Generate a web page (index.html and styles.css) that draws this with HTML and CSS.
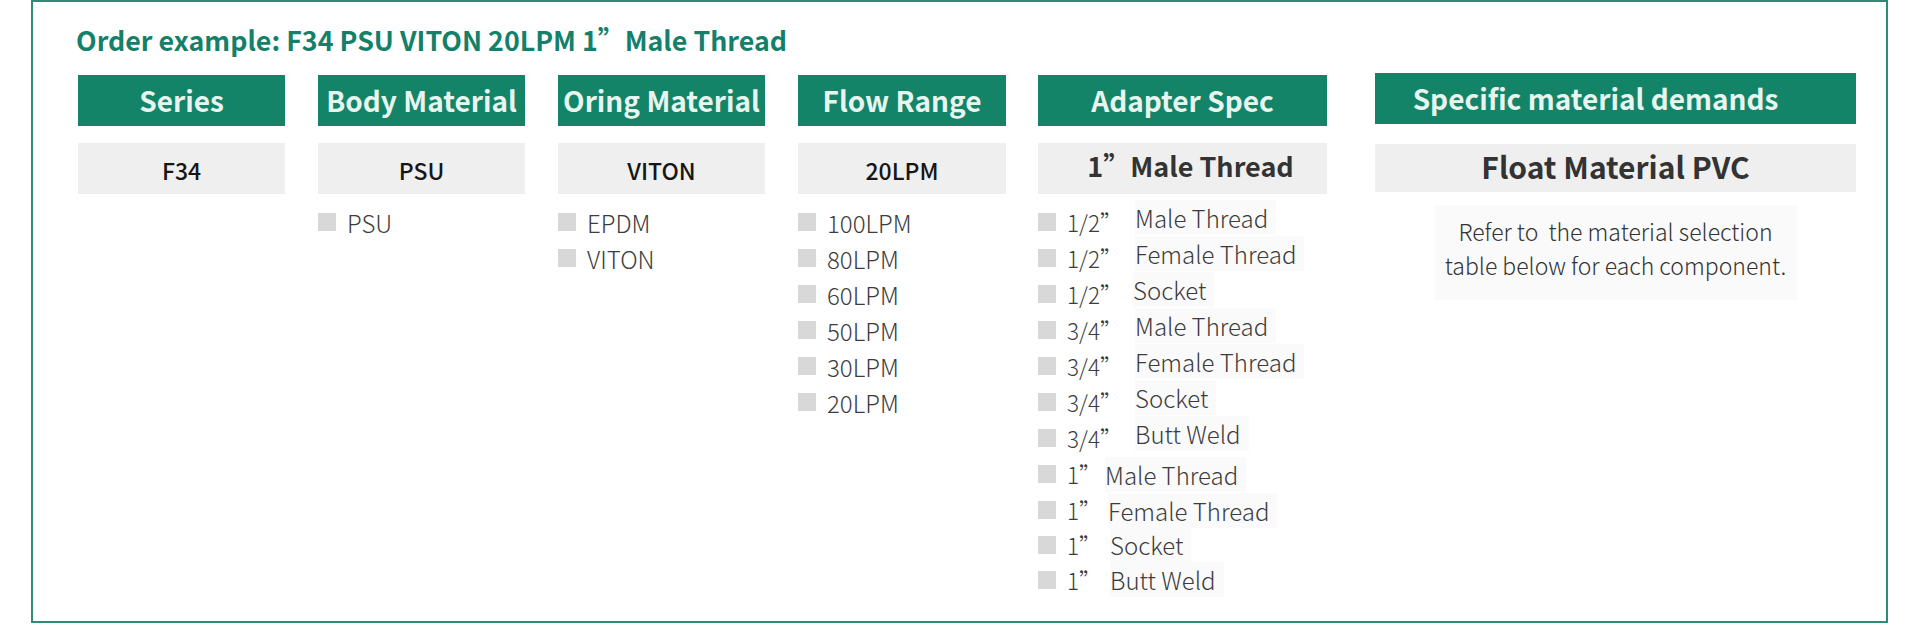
FILE: index.html
```html
<!DOCTYPE html>
<html>
<head>
<meta charset="utf-8">
<link rel="stylesheet" href="styles.css">
</head>
<body>
<div class="frame">
  <h1 class="title">Order example: F34 PSU VITON 20LPM 1”Male Thread</h1>
  <div class="cols">
    <div class="col c1">
      <div class="head">Series</div>
      <div class="val">F34</div>
    </div>
    <div class="col c2">
      <div class="head">Body Material</div>
      <div class="val">PSU</div>
      <ul class="list">
        <li><i class="sq"></i><span>PSU</span></li>
      </ul>
    </div>
    <div class="col c3">
      <div class="head">Oring Material</div>
      <div class="val">VITON</div>
      <ul class="list">
        <li><i class="sq"></i><span>EPDM</span></li>
        <li><i class="sq"></i><span>VITON</span></li>
      </ul>
    </div>
    <div class="col c4">
      <div class="head">Flow Range</div>
      <div class="val">20LPM</div>
      <ul class="list">
        <li><i class="sq"></i><span>100LPM</span></li>
        <li><i class="sq"></i><span>80LPM</span></li>
        <li><i class="sq"></i><span>60LPM</span></li>
        <li><i class="sq"></i><span>50LPM</span></li>
        <li><i class="sq"></i><span>30LPM</span></li>
        <li><i class="sq"></i><span>20LPM</span></li>
      </ul>
    </div>
    <div class="col c5">
      <div class="head">Adapter Spec</div>
      <div class="val strong shift">1”Male Thread</div>
      <ul class="list adapt">
        <li><i class="sq"></i><span class="frac">1/2”</span><span class="lab up">Male Thread</span></li>
        <li><i class="sq"></i><span class="frac">1/2”</span><span class="lab up">Female Thread</span></li>
        <li><i class="sq"></i><span class="frac">1/2”</span><span class="lab up sock">Socket</span></li>
        <li><i class="sq"></i><span class="frac">3/4”</span><span class="lab up">Male Thread</span></li>
        <li><i class="sq"></i><span class="frac">3/4”</span><span class="lab up">Female Thread</span></li>
        <li><i class="sq"></i><span class="frac">3/4”</span><span class="lab up">Socket</span></li>
        <li><i class="sq"></i><span class="frac">3/4”</span><span class="lab up">Butt Weld</span></li>
        <li><i class="sq"></i><span class="frac one">1”</span><span class="lab">Male Thread</span></li>
        <li class="tight"><i class="sq"></i><span class="frac one">1”</span><span class="lab down w2">Female Thread</span></li>
        <li class="tight"><i class="sq"></i><span class="frac one">1”</span><span class="lab w3">Socket</span></li>
        <li class="tight"><i class="sq"></i><span class="frac one">1”</span><span class="lab w3">Butt Weld</span></li>
      </ul>
    </div>
    <div class="col c6">
      <div class="head spec">Specific material demands</div>
      <div class="val strong big">Float Material PVC</div>
      <div class="note">Refer to&nbsp; the material selection<br>table below for each component.</div>
    </div>
  </div>
</div>
</body>
</html>
```

FILE: styles.css
```css
html, body {
  margin: 0;
  padding: 0;
  background: #ffffff;
}
body {
  width: 1920px;
  height: 624px;
  overflow: hidden;
  font-family: "Noto Sans CJK SC", "Noto Sans", sans-serif;
}
.frame {
  box-sizing: border-box;
  margin-left: 31px;
  width: 1857px;
  height: 623px;
  border: 2px solid #2f8a78;
  padding: 20px 0 0 45px;
}
.title {
  margin: 0 0 0 -2px;
  font-size: 26.8px;
  line-height: 36px;
  font-weight: 700;
  color: #14806a;
}
.cols {
  display: flex;
  align-items: flex-start;
  margin-top: 17px;
}
.col {
  display: flex;
  flex-direction: column;
  margin-right: 33px;
}
.c1, .c2, .c3 { width: 207px; }
.c4 { width: 208px; margin-right: 32px; }
.c5 { width: 289px; margin-right: 48px; }
.c6 { width: 481px; margin-right: 0; margin-top: -2px; }
.head {
  height: 51px;
  background: #138468;
  color: #e8f5ef;
  font-size: 28px;
  font-weight: 700;
  line-height: 51px;
  text-align: center;
  white-space: nowrap;
  box-sizing: border-box;
  padding-bottom: 4px;
}
.c4 .head { padding-bottom: 0; }
.head.spec { padding-right: 40px; }
.val {
  margin-top: 17px;
  height: 51px;
  box-sizing: border-box;
  padding-top: 4px;
  background: #efefef;
  color: #161616;
  font-size: 23px;
  font-weight: 500;
  line-height: 47px;
  text-align: center;
  white-space: nowrap;
}
.val.strong {
  color: #333333;
  font-size: 27px;
  font-weight: 700;
  padding-top: 0;
  line-height: 45px;
}
.val.shift { padding-left: 16px; }
.val.big {
  font-size: 30px;
  height: 48px;
  line-height: 44px;
  margin-top: 20px;
}
.list {
  list-style: none;
  margin: 10px 0 0 0;
  padding: 0;
}
.list li {
  display: flex;
  align-items: center;
  height: 36px;
  font-size: 24px;
  font-weight: 300;
  color: #3c3c3c;
  white-space: nowrap;
}
.list li.tight { height: 35px; }
.sq {
  display: block;
  flex: none;
  width: 18px;
  height: 18px;
  background: #d8d8d8;
  margin-right: 11px;
}
.frac {
  display: block;
  width: 68px;
  flex: none;
  font-size: 22.5px;
}
.frac.one { width: 38px; }
.lab {
  display: block;
  background: #fafafa;
  padding-right: 8px;
}
.lab.up { margin-bottom: 10px; }
.lab.sock { margin-left: -2px; }
.lab.down { margin-top: 2px; }
.lab.w2 { margin-left: 3px; }
.lab.w3 { margin-left: 5px; }
.note {
  align-self: center;
  margin-top: 13px;
  width: 362px;
  box-sizing: border-box;
  padding: 9px 0 18px;
  background: #fafafa;
  font-size: 23px;
  font-weight: 300;
  line-height: 34px;
  color: #333333;
  text-align: center;
  white-space: nowrap;
}
```
